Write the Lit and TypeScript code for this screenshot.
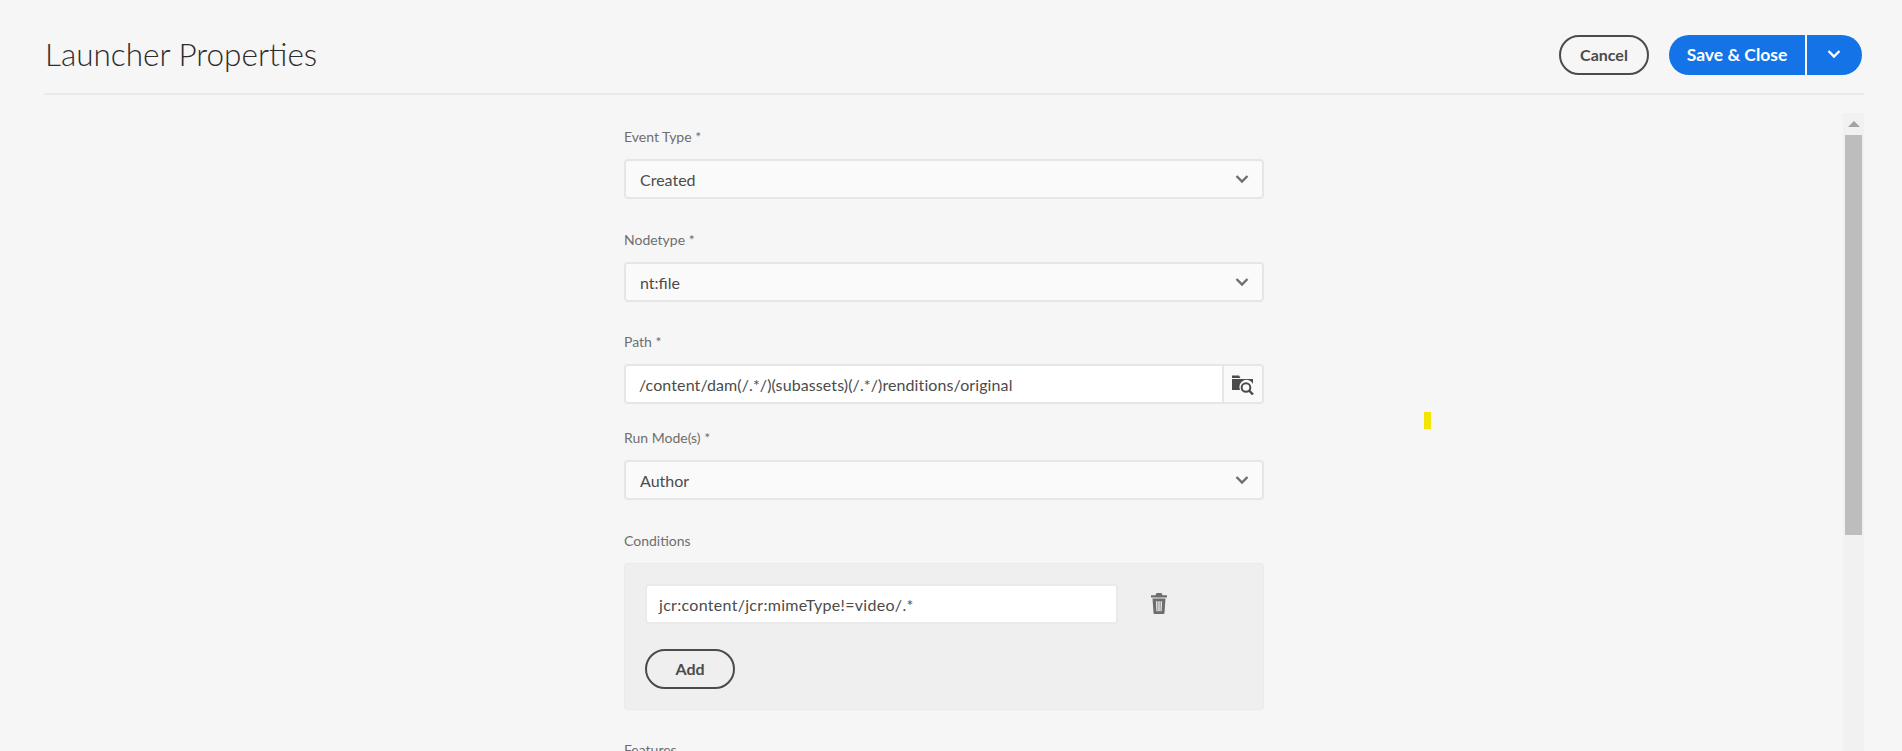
import { LitElement, html, css, svg } from "lit";
import { customElement } from "lit/decorators.js";

const chevron = svg`<svg class="chev" width="14" height="10" viewBox="0 0 14 10"><path d="M1.5 2 L7 7.5 L12.5 2" fill="none" stroke="currentColor" stroke-width="2.4"/></svg>`;

@customElement("app-root")
export class AppRoot extends LitElement {
  static styles = css`
    :host { display: block; height: 751px; overflow: hidden; position: relative; background: #f6f6f6; color: #4b4b4b; font-family: Lato, "Open Sans", sans-serif; }
    .header { display: flex; align-items: flex-start; justify-content: space-between; height: 93px; margin: 0 38px 0 44px; border-bottom: 2px solid #eaeaea; box-sizing: content-box; }
    h1 { margin: 34px 0 0 1px; font-size: 31.5px; font-weight: 300; color: #2c2c2c; line-height: 40px; }
    .actions { display: flex; align-items: center; margin: 35px 2px 0 0; }
    .btn { box-sizing: border-box; height: 40px; border-radius: 20px; font-size: 16px; font-weight: 700; display: flex; align-items: center; justify-content: center; padding-bottom: 2px; }
    .outline { width: 90px; border: 2px solid #4b4b4b; color: #4b4b4b; }
    .save { width: 136px; margin-left: 20px; background: #1473e6; color: #fff; border-radius: 20px 0 0 20px; font-size: 17.5px; }
    .drop { width: 55px; margin-left: 2px; background: #1473e6; color: #fff; border-radius: 0 20px 20px 0; padding-right: 2px; }
    .body { display: flex; height: 656px; }
    .form { flex: 1; padding: 32px 0 0 624px; box-sizing: border-box; width: 640px; }
    .field { width: 640px; }
    .label { font-size: 14px; line-height: 20px; color: #6e6e6e; height: 18px; margin-bottom: 14px; }
    .features { margin-top: 30px; height: 20px; margin-bottom: 0; }
    .control { box-sizing: border-box; height: 40px; border: 2px solid #e6e6e6; border-radius: 4px; display: flex; align-items: center; font-size: 16px; color: #4b4b4b; }
    .select { background: #fafafa; padding: 0 13px 0 14px; justify-content: space-between; color: #4b4b4b; }
    .select .chev { color: #6e6e6e; }
    .f1 { margin-bottom: 31px; }
    .f2 { margin-bottom: 30px; }
    .f3 { margin-bottom: 24px; }
    .f4 { margin-bottom: 31px; }
    .path { background: #fff; padding: 0; }
    .path span { flex: 1; padding-left: 13px; letter-spacing: 0.1px; }
    .browse { width: 38px; height: 100%; background: #fafafa; border-left: 2px solid #e6e6e6; display: flex; align-items: center; justify-content: center; border-radius: 0 3px 3px 0; }
    .box { box-sizing: border-box; height: 147px; background: #efefef; border: 1px solid #eaeaea; border-radius: 4px; padding: 20px; }
    .row { display: flex; align-items: center; }
    .cond { width: 473px; background: #fff; padding-left: 12px; border-color: #eaeaea; letter-spacing: 0.3px; }
    .trash { margin: -2px 0 0 32px; display: block; }
    .add { margin-top: 25px; }
    .scroll { width: 21px; margin: 18px 38px 0 0; background: #f1f1f1; display: flex; flex-direction: column; align-items: center; }
    .up { height: 22px; display: flex; align-items: center; justify-content: center; }
    .thumb { width: 17px; height: 400px; background: #bdbdbd; }
    .mark { position: absolute; left: 1424px; top: 412px; width: 7px; height: 17px; background: #f2e600; }
  `;

  render() {
    return html`
      <div class="header">
        <h1>Launcher Properties</h1>
        <div class="actions">
          <div class="btn outline">Cancel</div>
          <div class="btn save">Save &amp; Close</div>
          <div class="btn drop">${chevron}</div>
        </div>
      </div>
      <div class="body">
        <div class="form">
          <div class="field f1"><div class="label">Event Type *</div><div class="control select"><span>Created</span>${chevron}</div></div>
          <div class="field f2"><div class="label">Nodetype *</div><div class="control select"><span>nt:file</span>${chevron}</div></div>
          <div class="field f3"><div class="label">Path *</div>
            <div class="control path"><span>/content/dam(/.*/)(subassets)(/.*/)renditions/original</span>
              <div class="browse">
                <svg width="24" height="22" viewBox="0 0 24 22">
                  <path fill="#4b4b4b" d="M1 2.5 H8 L9.5 5 H1 Z M1 6 H22 V11 A7 7 0 0 0 9 17 H1 Z"/>
                  <circle cx="15" cy="14.5" r="4.3" fill="none" stroke="#4b4b4b" stroke-width="2"/>
                  <path d="M18 17.5 L22 21.5" stroke="#4b4b4b" stroke-width="2.4"/>
                </svg>
              </div>
            </div>
          </div>
          <div class="field f4"><div class="label">Run Mode(s) *</div><div class="control select"><span>Author</span>${chevron}</div></div>
          <div class="field"><div class="label">Conditions</div>
            <div class="box">
              <div class="row">
                <div class="control cond">jcr:content/jcr:mimeType!=video/.*</div>
                <svg class="trash" width="18" height="22" viewBox="0 0 18 20" preserveAspectRatio="none" fill="#6e6e6e">
                  <path d="M6.5 1 H11.5 L12.5 3 H17 V5 H1 V3 H5.5 Z"/>
                  <path fill-rule="evenodd" d="M2.5 6 H15.5 L14.5 19 A1 1 0 0 1 13.5 20 H4.5 A1 1 0 0 1 3.5 19 Z M6 8.5 L6.4 17.5 H7.6 L7.4 8.5 Z M8.3 8.5 V17.5 H9.7 V8.5 Z M10.6 8.5 L10.4 17.5 H11.6 L12 8.5 Z"/>
                </svg>
              </div>
              <div class="btn outline add">Add</div>
            </div>
          </div>
          <div class="field"><div class="label features">Features</div></div>
        </div>
        <div class="scroll">
          <div class="up"><svg width="12" height="6" viewBox="0 0 12 6"><path d="M6 0 L12 6 H0 Z" fill="#a3a3a3"/></svg></div>
          <div class="thumb"></div>
        </div>
      </div>
      <div class="mark"></div>
    `;
  }
}
